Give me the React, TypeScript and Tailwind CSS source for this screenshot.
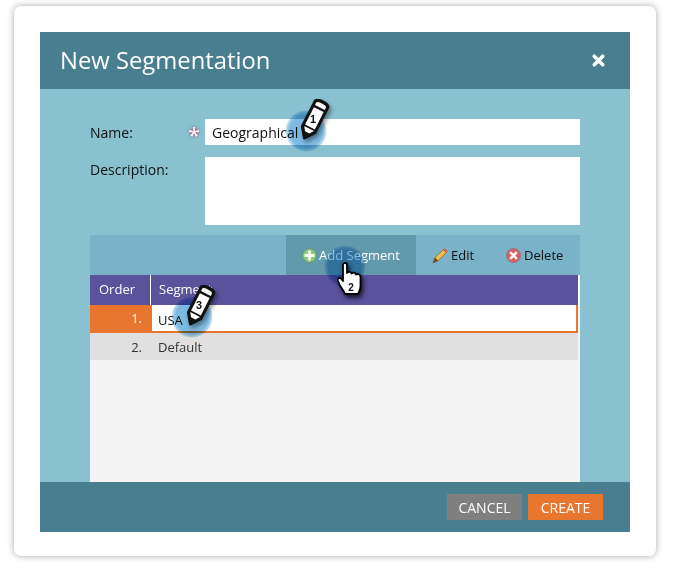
import { X } from 'lucide-react';

const font = { fontFamily: '"Open Sans", sans-serif' };

function Bubble({ className }: { className: string }) {
  return (
    <div
      className={`absolute h-[42px] w-[42px] rounded-full bg-[radial-gradient(circle_closest-side,#7ab8e0_0%,#7ebbe2_78%,#b4d8ee_92%,#ffffff_100%)] mix-blend-multiply ${className}`}
    />
  );
}

function Pencil({ n, className }: { n: number; className: string }) {
  return (
    <svg
      className={`absolute drop-shadow-[2px_3px_2px_rgba(0,0,0,0.4)] ${className}`}
      width="34"
      height="44"
      viewBox="0 0 28 36"
    >
      <g transform="rotate(27 14 18)">
        <path d="M8 2.5 a6 2.5 0 0 1 12 0 V26 L14 34 L8 26 Z" fill="#111" stroke="#111" strokeWidth="2" strokeLinejoin="round" />
        <path d="M9.5 3.5 a4.5 1.6 0 0 1 9 0 V5.5 H9.5 Z" fill="#fff" />
        <path d="M9.5 7.5 H18.5 V23.5 H9.5 Z" fill="#fff" />
        <path d="M9.5 25 H18.5 L16 28.5 H12 Z" fill="#fff" />
      </g>
      <text x="14" y="20" textAnchor="middle" fontSize="9" fontWeight="700" fill="#111" fontFamily="Liberation Sans, sans-serif">
        {n}
      </text>
    </svg>
  );
}

function Hand() {
  return (
    <svg
      className="absolute left-[323px] top-[256px] drop-shadow-[2px_3px_2px_rgba(0,0,0,0.7)]"
      width="28"
      height="36"
      viewBox="0 0 28 36"
    >
      <path
        d="M6 2.5 C6 .5 10 .5 10 2.5 V11 C11 9.5 14 9.5 14.5 11.5 C16 10 18.5 10.5 19 12.5 C20.5 11.5 23.5 12 23.5 15 V24 C23.5 28 22 30 21 32 H8 C7 29 5 27 3 23.5 L1 19 C0 16.5 3 15 4.5 17 L6 19 Z"
        fill="#fff"
        stroke="#000"
        strokeWidth="1.8"
        strokeLinejoin="round"
      />
      <text x="14" y="28.5" textAnchor="middle" fontSize="10" fontWeight="700" fill="#111" fontFamily="Liberation Sans, sans-serif">
        2
      </text>
    </svg>
  );
}

function PlusIcon() {
  return (
    <svg width="15" height="15" viewBox="0 0 15 15">
      <circle cx="7.5" cy="7.5" r="7" fill="#86c97f" stroke="#6f8f78" />
      <path d="M7.5 2.5 V12.5 M2.5 7.5 H12.5" stroke="#f2fbef" strokeWidth="2.8" />
    </svg>
  );
}

function EditIcon() {
  return (
    <svg width="17" height="17" viewBox="0 0 17 17">
      <path d="M1 16 L3 10.5 L12.5 1.5 L15.5 4.5 L6 13.8 Z" fill="#eebf4f" stroke="#8a6a2a" strokeWidth="0.8" />
      <path d="M12.5 1.5 L15.5 4.5 L14 6 L11 3 Z" fill="#e0605a" />
      <path d="M1 16 L3 10.5 L6 13.8 Z" fill="#5a4a30" />
    </svg>
  );
}

function DeleteIcon() {
  return (
    <svg width="15" height="15" viewBox="0 0 15 15">
      <circle cx="7.5" cy="7.5" r="7" fill="#de5f63" stroke="#8a7a7c" />
      <path d="M4.2 4.2 L10.8 10.8 M10.8 4.2 L4.2 10.8" stroke="#fff" strokeWidth="2.4" />
    </svg>
  );
}

export default function App() {
  return (
    <div className="h-[569px] w-[679px] bg-white pl-[14px] pt-[6px]" style={font}>
      <div className="relative h-[550px] w-[642px] rounded-[7px] bg-white p-[26px] shadow-[0_0_7px_rgba(0,0,0,0.35)]">
        <div className="flex h-[500px] w-[590px] flex-col bg-[#89c1d1]">
          <div className="flex h-[57px] shrink-0 items-center justify-between bg-[#487e90] pl-[20px] pr-[23px]">
            <h1 className="text-[23.8px] font-normal leading-none text-white">New Segmentation</h1>
            <X className="h-[17px] w-[17px] text-white" strokeWidth={5} />
          </div>

          <div className="flex min-h-0 flex-1 flex-col px-[50px] pt-[30px]">
            <div className="flex h-[26px] items-center text-[14px] text-[#111]">
              <span className="w-[98px]">Name:</span>
              <span className="w-[17px] pt-[4px] text-[22px] leading-none text-white [text-shadow:0_0_3px_#b02040]">*</span>
              <div className="flex h-[26px] w-[375px] items-center bg-white pl-[7px]">Geographical</div>
            </div>

            <div className="mt-[12px] flex text-[14px] text-[#111]">
              <span className="w-[115px] pt-[2px]">Description:</span>
              <div className="h-[68px] w-[375px] bg-white" />
            </div>

            <div className="mt-[10px] flex min-h-0 flex-1 flex-col">
              <div className="flex h-[40px] shrink-0 items-center bg-[#7ab3c9] pl-[196px] text-[13px] text-[#111]">
                <div className="flex h-full w-[130px] items-center gap-[2px] bg-[#6399ad] pl-[16px] pt-[1px] text-white">
                  <PlusIcon />
                  <span>Add Segment</span>
                </div>
                <div className="ml-[16px] flex items-center gap-[2px] pt-[1px]">
                  <EditIcon />
                  <span>Edit</span>
                </div>
                <div className="ml-[32px] flex items-center gap-[3px] pt-[1px]">
                  <DeleteIcon />
                  <span>Delete</span>
                </div>
              </div>

              <div className="flex-1 bg-[#f4f4f4] text-[13px]">
                <div className="flex h-[30px] w-[489px] items-center border-r border-white bg-[#5b529c] text-white">
                  <div className="flex h-full w-[61px] items-center border-r border-white pl-[9px]">Order</div>
                  <div className="pl-[8px]">Segment</div>
                </div>
                <div className="flex h-[28px] w-[488px] bg-[#e9762f] text-[#111]">
                  <div className="flex w-[62px] items-center justify-end pr-[10px] text-white">1.</div>
                  <div className="mb-[2px] mr-[2px] flex flex-1 items-center bg-white pl-[6px] pt-[5px]">USA</div>
                </div>
                <div className="flex h-[27px] w-[488px] items-center bg-[#e0e0e0] pt-[2px] text-[#333]">
                  <div className="w-[62px] pr-[10px] text-right">2.</div>
                  <div className="pl-[6px]">Default</div>
                </div>
              </div>
            </div>
          </div>

          <div className="flex h-[50px] shrink-0 items-start justify-end gap-[6px] bg-[#487e90] pr-[27px] pt-[12px] text-[14px] text-white">
            <button className="h-[26px] w-[75px] bg-[#7f7f7f]">CANCEL</button>
            <button className="h-[26px] w-[75px] bg-[#e9762f]">CREATE</button>
          </div>
        </div>

        <Bubble className="left-[271px] top-[104px]" />
        <Pencil n={1} className="left-[282px] top-[93px]" />
        <Bubble className="left-[310px] top-[239px]" />
        <Hand />
        <Bubble className="left-[157px] top-[290px]" />
        <Pencil n={3} className="left-[168px] top-[279px]" />
      </div>
    </div>
  );
}
